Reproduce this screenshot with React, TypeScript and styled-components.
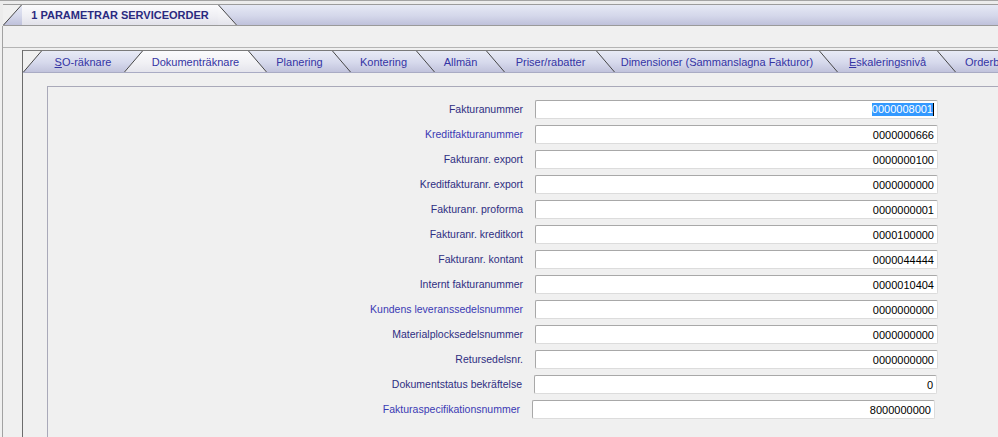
import { Fragment } from "react";
import styled, { createGlobalStyle } from "styled-components";

const GlobalStyle = createGlobalStyle`
  html, body {
    margin: 0;
    padding: 0;
    background: #f0f0f0;
  }
  body {
    font-family: "Liberation Sans", Arial, sans-serif;
    font-size: 11px;
  }
`;

const Window = styled.div`
  width: 998px;
  height: 437px;
  overflow: hidden;
  background: #f0f0f0;
`;

const OuterBar = styled.div`
  border-top: 1px solid #a4a4a4;
  padding-top: 3px;
  padding-left: 3px;
  background: #ececec;
`;

const OuterStrip = styled.div`
  display: flex;
  height: 20px;
  border-top: 1px solid #9c9c9c;
  border-bottom: 1px solid #9a9a9a;
  background: linear-gradient(#e6e9f5, #d4d7ea 55%, #bfc1db);
`;

const OuterTab = styled.div`
  width: 196px;
  display: flex;
  align-items: center;
  justify-content: center;
  background: linear-gradient(#fbfbfd, #eeeef3 60%, #e2e2ea);
  color: #2a2a80;
  font-weight: bold;
  font-size: 11px;
  white-space: nowrap;
`;

const Filler = styled.div`
  flex: 1;
`;

const Body = styled.div`
  margin-left: 2px;
  border-left: 1px solid #a2a2a2;
  height: 420px;
`;

const Toolbar = styled.div`
  height: 21px;
  border-bottom: 1px solid #b4b4b4;
`;

const InnerArea = styled.div`
  padding: 2px 0 0 19px;
`;

const InnerFrame = styled.div`
  border-left: 1px solid #6c6c6c;
  height: 400px;
  overflow: hidden;
`;

const InnerStrip = styled.div`
  display: flex;
  height: 21px;
  border-top: 1px solid #7a7a7a;
  border-bottom: 1px solid #a9abc4;
  box-shadow: 0 -1px 0 #c4c4c4;
  background: linear-gradient(#e8ebf6, #d6d9ec 55%, #c1c3dc);
  overflow: hidden;
`;

const Tab = styled.div<{ $w: number; $active?: boolean }>`
  flex: 0 0 ${(p) => p.$w}px;
  display: flex;
  align-items: center;
  justify-content: center;
  white-space: nowrap;
  color: #3434a4;
  font-size: 11px;
  background: ${(p) =>
    p.$active ? "linear-gradient(#fbfbfd, #f0f0f4 60%, #e4e4ec)" : "transparent"};
  u {
    text-decoration: underline;
  }
`;

const SlantSvg = styled.svg`
  flex: 0 0 auto;
  display: block;
`;

const Content = styled.div`
  padding: 13px 0 0 24px;
`;

const Panel = styled.div`
  width: 1000px;
  height: 360px;
  border: 1px solid #a9a9b9;
  padding-top: 13px;
`;

const FormGrid = styled.div`
  display: grid;
  grid-template-columns: 475px 403px;
  column-gap: 12px;
  row-gap: 6px;
`;

const Label = styled.div<{ $link?: boolean; $shift?: number }>`
  height: 19px;
  line-height: 19px;
  text-align: right;
  white-space: nowrap;
  color: ${(p) => (p.$link ? "#3a3ab4" : "#2e2e82")};
  font-size: 10.5px;
  transform: translateX(${(p) => p.$shift || 0}px);
`;

const Field = styled.div<{ $shift?: number }>`
  box-sizing: border-box;
  height: 19px;
  background: #fff;
  border: 1px solid;
  border-color: #a8a8a8 #dcdcdc #dcdcdc #a8a8a8;
  border-radius: 2px;
  display: flex;
  align-items: center;
  justify-content: flex-end;
  padding-right: 3px;
  color: #000;
  font-size: 11px;
  transform: translateX(${(p) => p.$shift || 0}px);
`;

const Selected = styled.span`
  background: #3399ff;
  color: #fff;
  line-height: 13px;
  border-right: 1px solid #000;
`;

type Dir = "/" | "\\";

const Slant = ({ dir, fill, side, w = 19, h = 21 }: { dir: Dir; fill?: string; side?: "a" | "b"; w?: number; h?: number }) => {
  // side "a" = triangle left of the line, "b" = triangle right of the line
  let pts = "";
  if (dir === "/") {
    pts = side === "a" ? `0,0 ${w},0 0,${h}` : `${w},0 ${w},${h} 0,${h}`;
  } else {
    pts = side === "a" ? `0,0 ${w},${h} 0,${h}` : `0,0 ${w},0 ${w},${h}`;
  }
  const line = dir === "/" ? `M0.5 ${h} L${w - 0.5} 0` : `M0.5 0 L${w - 0.5} ${h}`;
  return (
    <SlantSvg width={w} height={h} viewBox={`0 0 ${w} ${h}`}>
      <defs>
        <linearGradient id="activeGrad" x1="0" y1="0" x2="0" y2="1">
          <stop offset="0" stopColor="#fbfbfd" />
          <stop offset="0.6" stopColor="#f0f0f4" />
          <stop offset="1" stopColor="#e4e4ec" />
        </linearGradient>
      </defs>
      {fill && side && <polygon points={pts} fill={fill} />}
      <path d={line} stroke="#474747" strokeWidth="1" fill="none" />
    </SlantSvg>
  );
};

const tabs: { label: React.ReactNode; w: number }[] = [
  { label: <><u>S</u>O-räknare</>, w: 82 },
  { label: "Dokumenträknare", w: 105 },
  { label: "Planering", w: 65 },
  { label: "Kontering", w: 65 },
  { label: "Allmän", w: 51 },
  { label: "Priser/rabatter", w: 91 },
  { label: "Dimensioner (Sammanslagna Fakturor)", w: 204 },
  { label: <><u>E</u>skaleringsnivå</>, w: 99 },
  { label: "Orderbekräftelse", w: 100 },
];

const ACTIVE = 1;

const rows: { label: string; value: string; link?: boolean; shift?: number; selected?: boolean }[] = [
  { label: "Fakturanummer", value: "0000008001", selected: true },
  { label: "Kreditfakturanummer", value: "0000000666", link: true },
  { label: "Fakturanr. export", value: "0000000100" },
  { label: "Kreditfakturanr. export", value: "0000000000" },
  { label: "Fakturanr. proforma", value: "0000000001" },
  { label: "Fakturanr. kreditkort", value: "0000100000" },
  { label: "Fakturanr. kontant", value: "0000044444" },
  { label: "Internt fakturanummer", value: "0000010404" },
  { label: "Kundens leveranssedelsnummer", value: "0000000000", link: true },
  { label: "Materialplocksedelsnummer", value: "0000000000" },
  { label: "Retursedelsnr.", value: "0000000000" },
  { label: "Dokumentstatus bekräftelse", value: "0", shift: -1 },
  { label: "Fakturaspecifikationsnummer", value: "8000000000", link: true, shift: -3 },
];

const ACTIVE_FILL = "url(#activeGrad)";

export default function App() {
  const strip: React.ReactNode[] = [];
  strip.push(<Slant key="s-first" dir="/" fill="#f0f0f0" side="a" />);
  tabs.forEach((t, i) => {
    strip.push(
      <Tab key={`t${i}`} $w={t.w} $active={i === ACTIVE}>
        {t.label}
      </Tab>
    );
    if (i < tabs.length - 1) {
      if (i + 1 === ACTIVE) {
        strip.push(<Slant key={`s${i}`} dir="/" fill={ACTIVE_FILL} side="b" />);
      } else if (i === ACTIVE) {
        strip.push(<Slant key={`s${i}`} dir="\" fill={ACTIVE_FILL} side="a" />);
      } else {
        strip.push(<Slant key={`s${i}`} dir={i < ACTIVE ? "/" : "\\"} />);
      }
    }
  });

  return (
    <Window>
      <GlobalStyle />
      <OuterBar>
        <OuterStrip>
          <Slant dir="/" fill="#f0f0f0" side="a" h={20} />
          <OuterTab>1 PARAMETRAR SERVICEORDER</OuterTab>
          <Slant dir="\" fill={ACTIVE_FILL} side="a" h={20} />
          <Filler />
        </OuterStrip>
      </OuterBar>
      <Body>
        <Toolbar />
        <InnerArea>
          <InnerFrame>
            <InnerStrip>{strip}</InnerStrip>
            <Content>
              <Panel>
                <FormGrid>
                  {rows.map((r) => (
                    <Fragment key={r.label}>
                      <Label $link={r.link} $shift={r.shift}>
                        {r.label}
                      </Label>
                      <Field $shift={r.shift}>
                        {r.selected ? <Selected>{r.value}</Selected> : r.value}
                      </Field>
                    </Fragment>
                  ))}
                </FormGrid>
              </Panel>
            </Content>
          </InnerFrame>
        </InnerArea>
      </Body>
    </Window>
  );
}
